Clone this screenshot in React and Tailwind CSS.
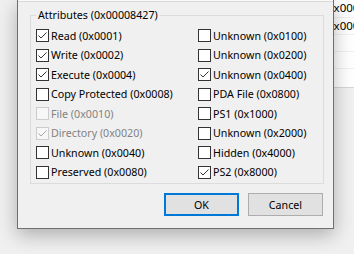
import React from "react";

const LEFT = [
  { label: "Read (0x0001)", checked: true },
  { label: "Write (0x0002)", checked: true },
  { label: "Execute (0x0004)", checked: true },
  { label: "Copy Protected (0x0008)", checked: false },
  { label: "File (0x0010)", checked: false, disabled: true },
  { label: "Directory (0x0020)", checked: true, disabled: true },
  { label: "Unknown (0x0040)", checked: false },
  { label: "Preserved (0x0080)", checked: false },
];

const RIGHT = [
  { label: "Unknown (0x0100)", checked: false },
  { label: "Unknown (0x0200)", checked: false },
  { label: "Unknown (0x0400)", checked: true },
  { label: "PDA File (0x0800)", checked: false },
  { label: "PS1 (0x1000)", checked: false },
  { label: "Unknown (0x2000)", checked: false },
  { label: "Hidden (0x4000)", checked: false },
  { label: "PS2 (0x8000)", checked: true },
];

const CheckBox = ({ label, checked, disabled }) => {
  return (
    <div className="flex h-[19.5px] items-center gap-[2px]">
      <div
        className={`h-[13px] w-[13px] shrink-0 border ${
          disabled ? "border-[#cccccc] bg-[#f7f7f7]" : "border-[#333333] bg-white"
        }`}
      >
        {checked && (
          <svg width="11" height="11" viewBox="0 0 11 11">
            <polyline
              points="1.5,5.5 4,8 9.5,2.5"
              fill="none"
              stroke={disabled ? "#a8a8a8" : "#333333"}
              strokeWidth="1"
            />
          </svg>
        )}
      </div>
      <span className={`whitespace-nowrap ${disabled ? "text-[#838383]" : "text-black"}`}>
        {label}
      </span>
    </div>
  );
};

const App = () => {
  const rows = [];
  LEFT.forEach((item, i) => {
    rows.push(<CheckBox key={`l${i}`} {...item} />);
    rows.push(<CheckBox key={`r${i}`} {...RIGHT[i]} />);
  });

  return (
    <div className="flex h-[254px] w-[354px] items-start overflow-hidden bg-[#f0f0f0] font-['Noto_Sans',sans-serif] text-[10.7px] leading-[16px] text-black">
      {/* gutter left of the dialog */}
      <div className="w-[17px] shrink-0" />

      {/* dialog */}
      <div className="relative z-10 w-[317px] shrink-0 border-x border-b border-[#6f6f6f] bg-[#f0f0f0] shadow-[0_6px_18px_rgba(0,0,0,0.28)]">
        <div className="h-[1px] bg-[#fafafa]" />
        <div className="h-[1px] bg-[#d9d9d9]" />

        <div className="relative ml-[12px] mt-[13px] h-[169px] w-[294px] border border-[#dcdcdc]">
          <span className="absolute -top-[9px] left-[5px] bg-[#f0f0f0] px-[2px]">
            Attributes (0x00008427)
          </span>
          <div className="grid grid-cols-[162px_1fr] pl-[5px] pt-[10px]">{rows}</div>
        </div>

        <div className="mt-[9px] flex justify-end gap-[9px] pb-[12px] pr-[10px]">
          <button className="h-[23px] w-[75px] border-2 border-[#0078d7] bg-[#e1e1e1]">OK</button>
          <button className="h-[23px] w-[75px] border border-[#adadad] bg-[#e1e1e1]">Cancel</button>
        </div>
      </div>

      {/* window behind, right side */}
      <div className="min-w-0 flex-1 overflow-hidden text-[11.5px]">
        <div className="h-[88px] border-b border-[#d6d6d6] bg-white">
          {["0x000", "0x000", "", "", ""].map((t, i) => (
            <div
              key={i}
              className={`h-[17px] whitespace-nowrap ${i > 0 ? "border-t border-[#f0f0f0]" : ""}`}
            >
              <span className="-ml-[7px] leading-[16px]">{t}</span>
            </div>
          ))}
        </div>
      </div>
    </div>
  );
};

export default App;
